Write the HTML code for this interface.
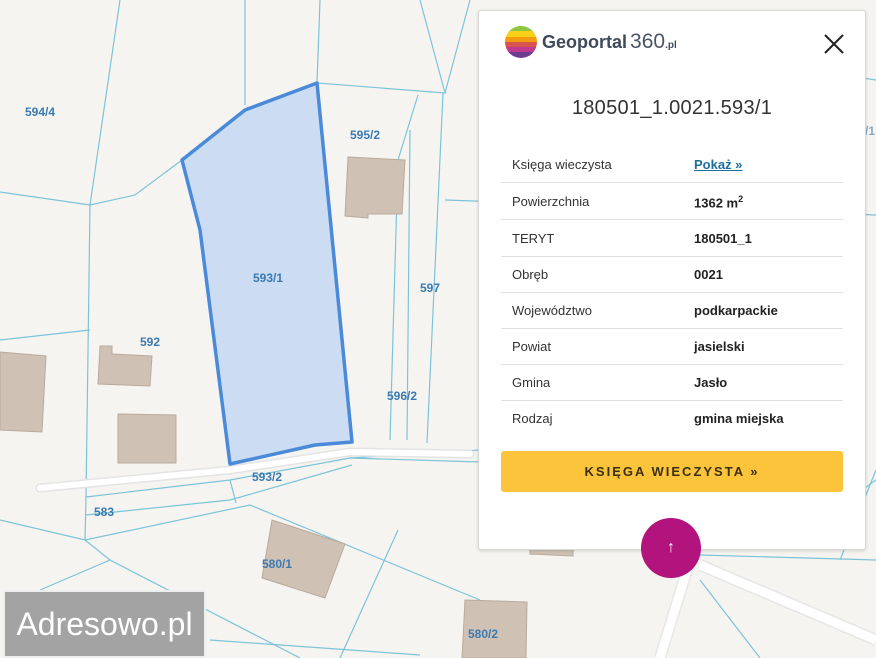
<!DOCTYPE html>
<html><head><meta charset="utf-8"><style>
body{margin:0;width:876px;height:658px;overflow:hidden;background:#f6f4f1;font-family:"Liberation Sans",sans-serif;position:relative}
svg.map{position:absolute;left:0;top:0}
.lbl{font:bold 12px "Liberation Sans",sans-serif;fill:#3a7ab0}
.panel{position:absolute;left:478px;top:10px;width:386px;height:538px;background:#fff;border:1px solid #d8d8d8;border-radius:3px;box-shadow:0 1px 3px rgba(0,0,0,.15)}
.logo{position:absolute;left:25px;top:14px;height:34px;display:flex;align-items:center}
.logo .t{font-size:18px;color:#3e4a5a;font-weight:bold;margin-left:4px}
.logo .n{font-size:21px;color:#4a5564;font-weight:normal;margin-left:3px}
.logo .p{font-size:10px;color:#3e4a5a;font-weight:bold;margin-top:6px}
.close{position:absolute;left:344px;top:22px}
h1{position:absolute;left:0;width:386px;top:86px;margin:0;text-align:center;font-weight:normal;font-size:20px;color:#333;letter-spacing:.3px}
.row{position:absolute;left:22px;width:342px;height:36px;border-bottom:1px solid #e0e0e0;font-size:13px;color:#333}
.row span{position:absolute;top:11px}
.row .v{left:193px;font-weight:bold;color:#222}
.row .l{left:11px}
.btn{position:absolute;left:22px;top:440px;width:342px;height:41px;background:#fcc43a;border-radius:3px;text-align:center;line-height:41px;font-weight:bold;font-size:13px;letter-spacing:2px;color:#3a2f10}
.up{position:absolute;left:641px;top:518px;width:60px;height:60px;border-radius:50%;background:#b3137c;color:#fff;text-align:center;line-height:60px;font-size:16px}
.ad{position:absolute;left:3px;top:590px;width:199px;height:64px;background:#a3a3a3;border:2px solid #eee;border-radius:2px;color:#fff;font-size:32px;line-height:64px;text-align:center;box-sizing:content-box}
</style></head><body>
<svg class="map" width="876" height="658" viewBox="0 0 876 658">
<g fill="none" stroke="#7cc3d9" stroke-width="1.2">
<path d="M120 0 L90 205 L86 497 L85 540 L0 520"/>
<path d="M0 192 L90 205 L135 195 L182 160"/>
<path d="M245 0 L245 105"/>
<path d="M320 0 L317 83 L445 93 L470 0"/>
<path d="M445 93 L420 0"/>
<path d="M443 93 L427 443"/>
<path d="M418 95 L398 160 L390 440"/>
<path d="M410 130 L407 440"/>
<path d="M445 200 L876 215"/>
<path d="M0 340 L90 330"/>
<path d="M86 497 L230 480 L350 458 L480 450"/>
<path d="M86 515 L230 500 L352 465"/>
<path d="M230 480 L236 503"/>
<path d="M85 540 L250 505 L480 600"/>
<path d="M85 540 L110 560 L40 590"/>
<path d="M110 560 L300 658"/>
<path d="M210 640 L420 655"/>
<path d="M398 530 L340 658"/>
<path d="M350 458 L480 462"/>
<path d="M700 555 L876 560"/>
<path d="M700 580 L760 658"/>
<path d="M820 520 L876 480"/>
<path d="M840 560 L876 470"/>
<path d="M480 20 L876 80"/>
</g>
<path d="M40 488 L230 470 L350 452 L470 454" stroke="#e4e4e4" stroke-width="9" fill="none" stroke-linecap="round"/>
<path d="M40 488 L230 470 L350 452 L470 454" stroke="#fff" stroke-width="6" fill="none" stroke-linecap="round"/>
<path d="M690 560 L660 658 M700 565 L876 640" stroke="#e6e6e6" stroke-width="12" fill="none"/>
<path d="M690 560 L660 658 M700 565 L876 640" stroke="#fff" stroke-width="9" fill="none"/>
<g fill="#cfc2b5" stroke="#b9aa9b">
<path d="M0 352 L46 356 L42 432 L0 430Z"/>
<path d="M100 346 L112 346 L112 354 L152 356 L150 386 L98 384Z"/>
<path d="M118 414 L176 415 L176 463 L118 463Z"/>
<path d="M348 157 L405 160 L402 214 L368 214 L368 218 L345 216Z"/>
<path d="M272 520 L345 544 L325 598 L262 578Z"/>
<path d="M465 600 L527 602 L526 658 L462 658Z"/>
<path d="M528 505 L575 505 L573 556 L530 554Z"/>
</g>
<path d="M182 160 L245 110 L317 83 L352 442 L315 445 L230 464 L200 230 Z" fill="#ccdcf2" stroke="#4a8ad8" stroke-width="3.5" stroke-linejoin="round"/>
<text class="lbl" x="25" y="116">594/4</text>
<text class="lbl" x="350" y="139">595/2</text>
<text class="lbl" x="253" y="282">593/1</text>
<text class="lbl" x="420" y="292">597</text>
<text class="lbl" x="140" y="346">592</text>
<text class="lbl" x="387" y="400">596/2</text>
<text class="lbl" x="252" y="481">593/2</text>
<text class="lbl" x="94" y="516">583</text>
<text class="lbl" x="262" y="568">580/1</text>
<text class="lbl" x="468" y="638">580/2</text>
<text class="lbl" x="785" y="511" opacity=".6">924/3</text>
<text class="lbl" x="845" y="135" opacity=".6">598/1</text>
</svg>
<div class="panel">
<div class="logo">
<svg width="34" height="34" viewBox="0 0 34 34"><clipPath id="c"><circle cx="17" cy="17" r="16"/></clipPath><g clip-path="url(#c)"><rect y="0" width="34" height="7" fill="#8dc63f"/><rect y="6" width="34" height="6" fill="#f7d117"/><rect y="12" width="34" height="5" fill="#f39c12"/><rect y="17" width="34" height="5" fill="#d9534f"/><rect y="22" width="34" height="5" fill="#c0398f"/><rect y="27" width="34" height="7" fill="#6a3d8f"/></g></svg>
<span class="t">Geoportal</span><span class="n">360</span><span class="p">.pl</span></div>
<svg class="close" width="22" height="22" viewBox="0 0 22 22"><path d="M2 2L20 20M20 2L2 20" stroke="#222" stroke-width="2"/></svg>
<h1>180501_1.0021.593/1</h1>
<div class="row" style="top:135px"><span class="l">Księga wieczysta</span><span class="v" style="color:#1c6f9a;text-decoration:underline">Pokaż »</span></div>
<div class="row" style="top:172px"><span class="l">Powierzchnia</span><span class="v">1362 m<sup style="font-size:9px">2</sup></span></div>
<div class="row" style="top:209px"><span class="l">TERYT</span><span class="v">180501_1</span></div>
<div class="row" style="top:245px"><span class="l">Obręb</span><span class="v">0021</span></div>
<div class="row" style="top:281px"><span class="l">Województwo</span><span class="v">podkarpackie</span></div>
<div class="row" style="top:317px"><span class="l">Powiat</span><span class="v">jasielski</span></div>
<div class="row" style="top:353px"><span class="l">Gmina</span><span class="v">Jasło</span></div>
<div class="row" style="top:389px;border:none"><span class="l">Rodzaj</span><span class="v">gmina miejska</span></div>
<div class="btn">KSIĘGA WIECZYSTA »</div>
</div>
<div class="up">↑</div>
<div class="ad">Adresowo.pl</div>
</body></html>
